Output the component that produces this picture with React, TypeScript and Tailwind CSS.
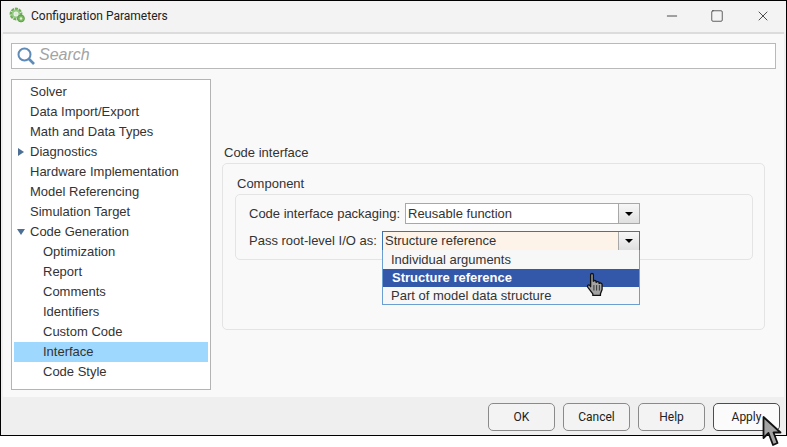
import React from 'react';
import { Minus, Square, X } from 'lucide-react';

const treeRows = [
  { label: 'Solver', depth: 0 },
  { label: 'Data Import/Export', depth: 0 },
  { label: 'Math and Data Types', depth: 0 },
  { label: 'Diagnostics', depth: 0, arrow: 'right' },
  { label: 'Hardware Implementation', depth: 0 },
  { label: 'Model Referencing', depth: 0 },
  { label: 'Simulation Target', depth: 0 },
  { label: 'Code Generation', depth: 0, arrow: 'down' },
  { label: 'Optimization', depth: 1 },
  { label: 'Report', depth: 1 },
  { label: 'Comments', depth: 1 },
  { label: 'Identifiers', depth: 1 },
  { label: 'Custom Code', depth: 1 },
  { label: 'Interface', depth: 1, selected: true },
  { label: 'Code Style', depth: 1 },
];

const GearIcon = () => (
  <svg width="18" height="18" viewBox="0 0 18 18">
    <circle cx="7" cy="7" r="5.2" fill="none" stroke="#6fae57" strokeWidth="2.4" strokeDasharray="3 0.8" />
    <circle cx="7" cy="7" r="3.400" fill="none" stroke="#93c983" strokeWidth="1.800" />
    <circle cx="7" cy="7" r="1.800" fill="#dcedd6" />
    <circle cx="12" cy="11.500" r="3.400" fill="#7dbb62" stroke="#5f9e4c" strokeWidth="1" />
    <circle cx="12" cy="11.500" r="1.200" fill="#e2f0da" />
  </svg>
);

const SearchIcon = () => (
  <svg width="20" height="20" viewBox="0 0 20 20">
    <circle cx="8.5" cy="8.5" r="6" fill="none" stroke="#5f8bb8" strokeWidth="2" />
    <path d="M13 13l5 5" stroke="#5f8bb8" strokeWidth="2.6" />
  </svg>
);

const ComboArrow = () => (
  <div className="flex w-[21px] items-center justify-center self-stretch border-l border-[#a8a8a8] bg-gradient-to-b from-[#f7f7f7] to-[#e0e0e0]">
    <div className="h-0 w-0 border-x-[4px] border-t-[4px] border-x-transparent border-t-black" />
  </div>
);

const HandCursor = () => (
  <svg width="18" height="24" viewBox="0 0 16 22">
    <path
      d="M4 2.500C4 1 6.500 1 6.500 2.500V8.500C7 7.500 9 7.500 9 8.800V9.500C9.500 8.500 11.800 8.500 11.800 10V10.500C12.500 9.800 14.500 10 14.500 11.500V16L13 20V21.500H6V20L1.500 14C.5 12.500 2 11 3.500 12.500L4 13.500Z"
      fill="#a3a3a3"
      stroke="#111"
      strokeWidth="1.200"
      strokeLinejoin="round"
    />
    <path d="M7 12v5M9.500 12v5M12 12v5" stroke="#222" strokeWidth="0.8" />
  </svg>
);

const ArrowCursor = () => (
  <svg width="22" height="30" viewBox="0 0 22 30">
    <path d="M1.500 1V22L6.500 17L11 29L15.500 27L11.500 16.500H18.500Z" fill="#a3a3a3" stroke="#111" strokeWidth="1.800" strokeLinejoin="round" />
  </svg>
);

const DialogButton = ({ label, active }: { label: string; active?: boolean }) => (
  <button
    className={`relative h-[28px] w-[67px] rounded-[5px] border font-['Roboto',sans-serif] text-[12px] text-[#222] ${
      active ? 'border-[#4d4d4d] bg-[#fbfbfb]' : 'border-[#8a8a8a] bg-[#f3f3f3]'
    }`}
  >
    {label}
  </button>
);

export default function App() {
  return (
    <div className="relative h-[447px] w-[787px] overflow-hidden bg-white font-['Liberation_Sans',sans-serif] text-[13px] text-[#333]">
      <div className="flex h-[436px] w-[787px] flex-col border border-black bg-[#efefef]">
        {/* title bar */}
        <div className="flex h-[31px] shrink-0 items-center bg-[#f3f3f3] pb-[2px] pl-[8px]">
          <GearIcon />
          <span className="ml-[4px] font-['Roboto',sans-serif] text-[12px] text-[#222]">Configuration Parameters</span>
          <div className="ml-auto flex items-center gap-[30px] pr-[15px] text-[#222]">
            <Minus size={16} strokeWidth={1.2} />
            <Square size={14} strokeWidth={1.2} />
            <X size={16} strokeWidth={1.2} className="ml-px" />
          </div>
        </div>

        {/* main area */}
        <div className="mx-[2px] flex h-[365px] shrink-0 flex-col border-t-[2px] border-[#dcdcdc] bg-[#f9f9f9] px-[8px] pt-[9px]">
          <div className="flex h-[26px] w-[765px] shrink-0 items-center border border-[#b9b9b9] bg-white pl-[4px]">
            <SearchIcon />
            <span className="ml-[3px] pb-[2px] text-[16px] italic text-[#a3a3a3]">Search</span>
          </div>

          <div className="mt-[10px] flex">
            {/* tree */}
            <div className="h-[311px] w-[200px] shrink-0 border border-[#b4b4b4] bg-white p-[2px]">
              {treeRows.map((row) => (
                <div
                  key={row.label}
                  className={`relative flex h-[20px] items-center ${row.depth ? 'pl-[29px]' : 'pl-[16px]'} ${
                    row.selected ? 'bg-[#9fd8ff]' : ''
                  }`}
                >
                  {row.arrow === 'right' && (
                    <div className="absolute left-[4px] h-0 w-0 border-y-[4px] border-l-[6px] border-y-transparent border-l-[#4d6f96]" />
                  )}
                  {row.arrow === 'down' && (
                    <div className="absolute left-[3px] h-0 w-0 border-x-[4px] border-t-[6px] border-x-transparent border-t-[#4d6f96]" />
                  )}
                  {row.label}
                </div>
              ))}
            </div>

            {/* settings */}
            <div className="ml-[11px] flex w-[543px] shrink-0 flex-col pt-[66px]">
              <div className="pl-[2px] leading-[16px]">Code interface</div>
              <div className="mt-[2px] h-[167px] rounded-[5px] border border-[#e4e4e4] px-[12px] pt-[12px]">
                <div className="pl-[2px] leading-[16px]">Component</div>
                <div className="relative mt-[2px] h-[66px] w-[518px] rounded-[5px] border border-[#e4e4e4] pl-[13px] pt-[8px]">
                  <div className="flex h-[21px] items-center">
                    <span className="w-[156px]">Code interface packaging:</span>
                    <div className="flex h-[21px] w-[235px] items-center border border-[#a8a8a8] bg-white pl-[2px]">
                      <span className="flex-1">Reusable function</span>
                      <ComboArrow />
                    </div>
                  </div>
                  <div className="mt-[7px] flex h-[20px] items-center">
                    <span className="w-[133px]">Pass root-level I/O as:</span>
                    <div className="flex h-[20px] w-[258px] items-center border border-[#3b73b5] bg-[#fdf3e9] pl-[2px]">
                      <span className="flex-1">Structure reference</span>
                      <ComboArrow />
                    </div>
                  </div>

                  {/* open combo list */}
                  <div className="absolute left-[146px] top-[55px] z-10 w-[258px] border border-t-0 border-[#6d9ed1] bg-[#f7f7f7] pt-px">
                    <div className="flex h-[18px] items-center pl-[8px]">Individual arguments</div>
                    <div className="flex h-[18px] items-center bg-[#3358aa] pl-[9px] font-bold text-white">Structure reference</div>
                    <div className="flex h-[17px] items-center pl-[8px]">Part of model data structure</div>
                  </div>
                </div>
              </div>
            </div>
          </div>
        </div>

        {/* footer */}
        <div className="flex flex-1 items-start justify-end gap-[8px] pr-[6px] pt-[6px]">
          <DialogButton label="OK" />
          <DialogButton label="Cancel" />
          <DialogButton label="Help" />
          <DialogButton label="Apply" active />
        </div>
      </div>

      <div className="absolute left-[586px] top-[272px] z-20">
        <HandCursor />
      </div>
      <div className="absolute left-[762px] top-[416px] z-20">
        <ArrowCursor />
      </div>
    </div>
  );
}
